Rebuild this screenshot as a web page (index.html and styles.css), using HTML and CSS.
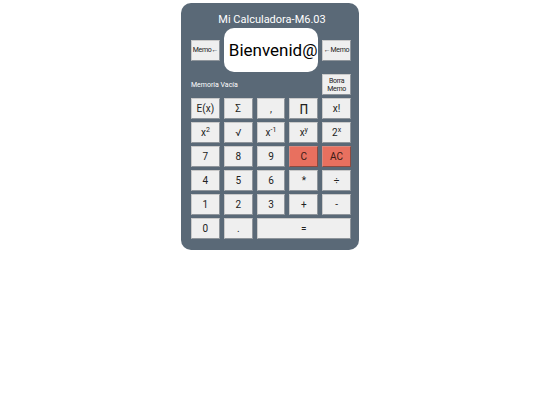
FILE: index.html
```html
<!DOCTYPE HTML>
<html>

<head>
  <title>Mi Calculadora</title>
  <meta name="viewport" content="width=device-width, initial-scale=1">
  <link rel="stylesheet" href="styles.css">
</head>

<body>
  <main class="calc">
    <header class="title">Mi Calculadora-M6.03</header>

    <section class="row top">
      <button class="key small">Memo&larr;</button>
      <div class="display" id="display">Bienvenid@</div>
      <button class="key small">&larr;Memo</button>
    </section>

    <section class="row mem">
      <span class="mem-label" id="mem-label">Memoria Vacía</span>
      <button class="key small">Borra<br>Memo</button>
    </section>

    <section class="row keys">
      <button class="key">E(x)</button>
      <button class="key">Σ</button>
      <button class="key">,</button>
      <button class="key prod">∏</button>
      <button class="key">x!</button>

      <button class="key">x<sup>2</sup></button>
      <button class="key">√</button>
      <button class="key">x<sup>-1</sup></button>
      <button class="key">x<sup>y</sup></button>
      <button class="key">2<sup>x</sup></button>

      <button class="key">7</button>
      <button class="key">8</button>
      <button class="key">9</button>
      <button class="key red">C</button>
      <button class="key red">AC</button>

      <button class="key">4</button>
      <button class="key">5</button>
      <button class="key">6</button>
      <button class="key">*</button>
      <button class="key">÷</button>

      <button class="key">1</button>
      <button class="key">2</button>
      <button class="key">3</button>
      <button class="key">+</button>
      <button class="key">-</button>

      <button class="key">0</button>
      <button class="key">.</button>
      <button class="key wide">=</button>
    </section>
  </main>
</body>

</html>
```

FILE: styles.css
```css
body {
  margin: 0;
  background: white;
  font-family: Roboto, "Liberation Sans", sans-serif;
}

.calc {
  width: 160px;
  margin: 3px auto 0;
  padding: 10px 8px 11px 10px;
  background-color: #5a6977;
  border-radius: 10px;
  box-sizing: content-box;
}

.title {
  color: white;
  font-size: 11px;
  line-height: 14px;
  text-align: center;
  padding-left: 2px;
  margin-bottom: 1px;
}

.row {
  display: grid;
  grid-template-columns: repeat(5, 1fr);
  column-gap: 4px;
  width: 160px;
}

.top {
  align-items: center;
}

.top .key {
  height: 21px;
}

.display {
  grid-column: span 3;
  height: 44px;
  background: white;
  border-radius: 10px;
  font-size: 17px;
  line-height: 44px;
  padding-left: 5px;
  white-space: nowrap;
  overflow: hidden;
  color: black;
}

.mem {
  margin-top: 2px;
  align-items: center;
}

.mem-label {
  grid-column: span 4;
  color: white;
  font-size: 7px;
  padding-top: 1px;
}

.keys {
  margin-top: 3px;
  grid-auto-rows: 21px;
  row-gap: 3px;
}

.key {
  height: 21px;
  margin: 0;
  padding: 0;
  background: #efefef;
  border: 1px solid #c9c9c9;
  border-right-color: #8f959b;
  border-bottom-color: #8f959b;
  color: #222;
  font-family: Roboto, "Liberation Sans", sans-serif;
  font-size: 10px;
  line-height: 1;
  cursor: pointer;

  & sup {
    font-size: 7px;
    vertical-align: 4px;
    line-height: 0;
  }
}

.key.prod {
  font-family: "DejaVu Sans", sans-serif;
  font-size: 11px;
}

.key.small {
  font-size: 7px;
  line-height: 8px;
  letter-spacing: -0.3px;
}

.key.red {
  background: #e8705f;
  border-color: #d98a7f;
  border-right-color: #8d4a40;
  border-bottom-color: #8d4a40;
  color: #3a1a14;
}

.key.wide {
  grid-column: span 3;
}
```
